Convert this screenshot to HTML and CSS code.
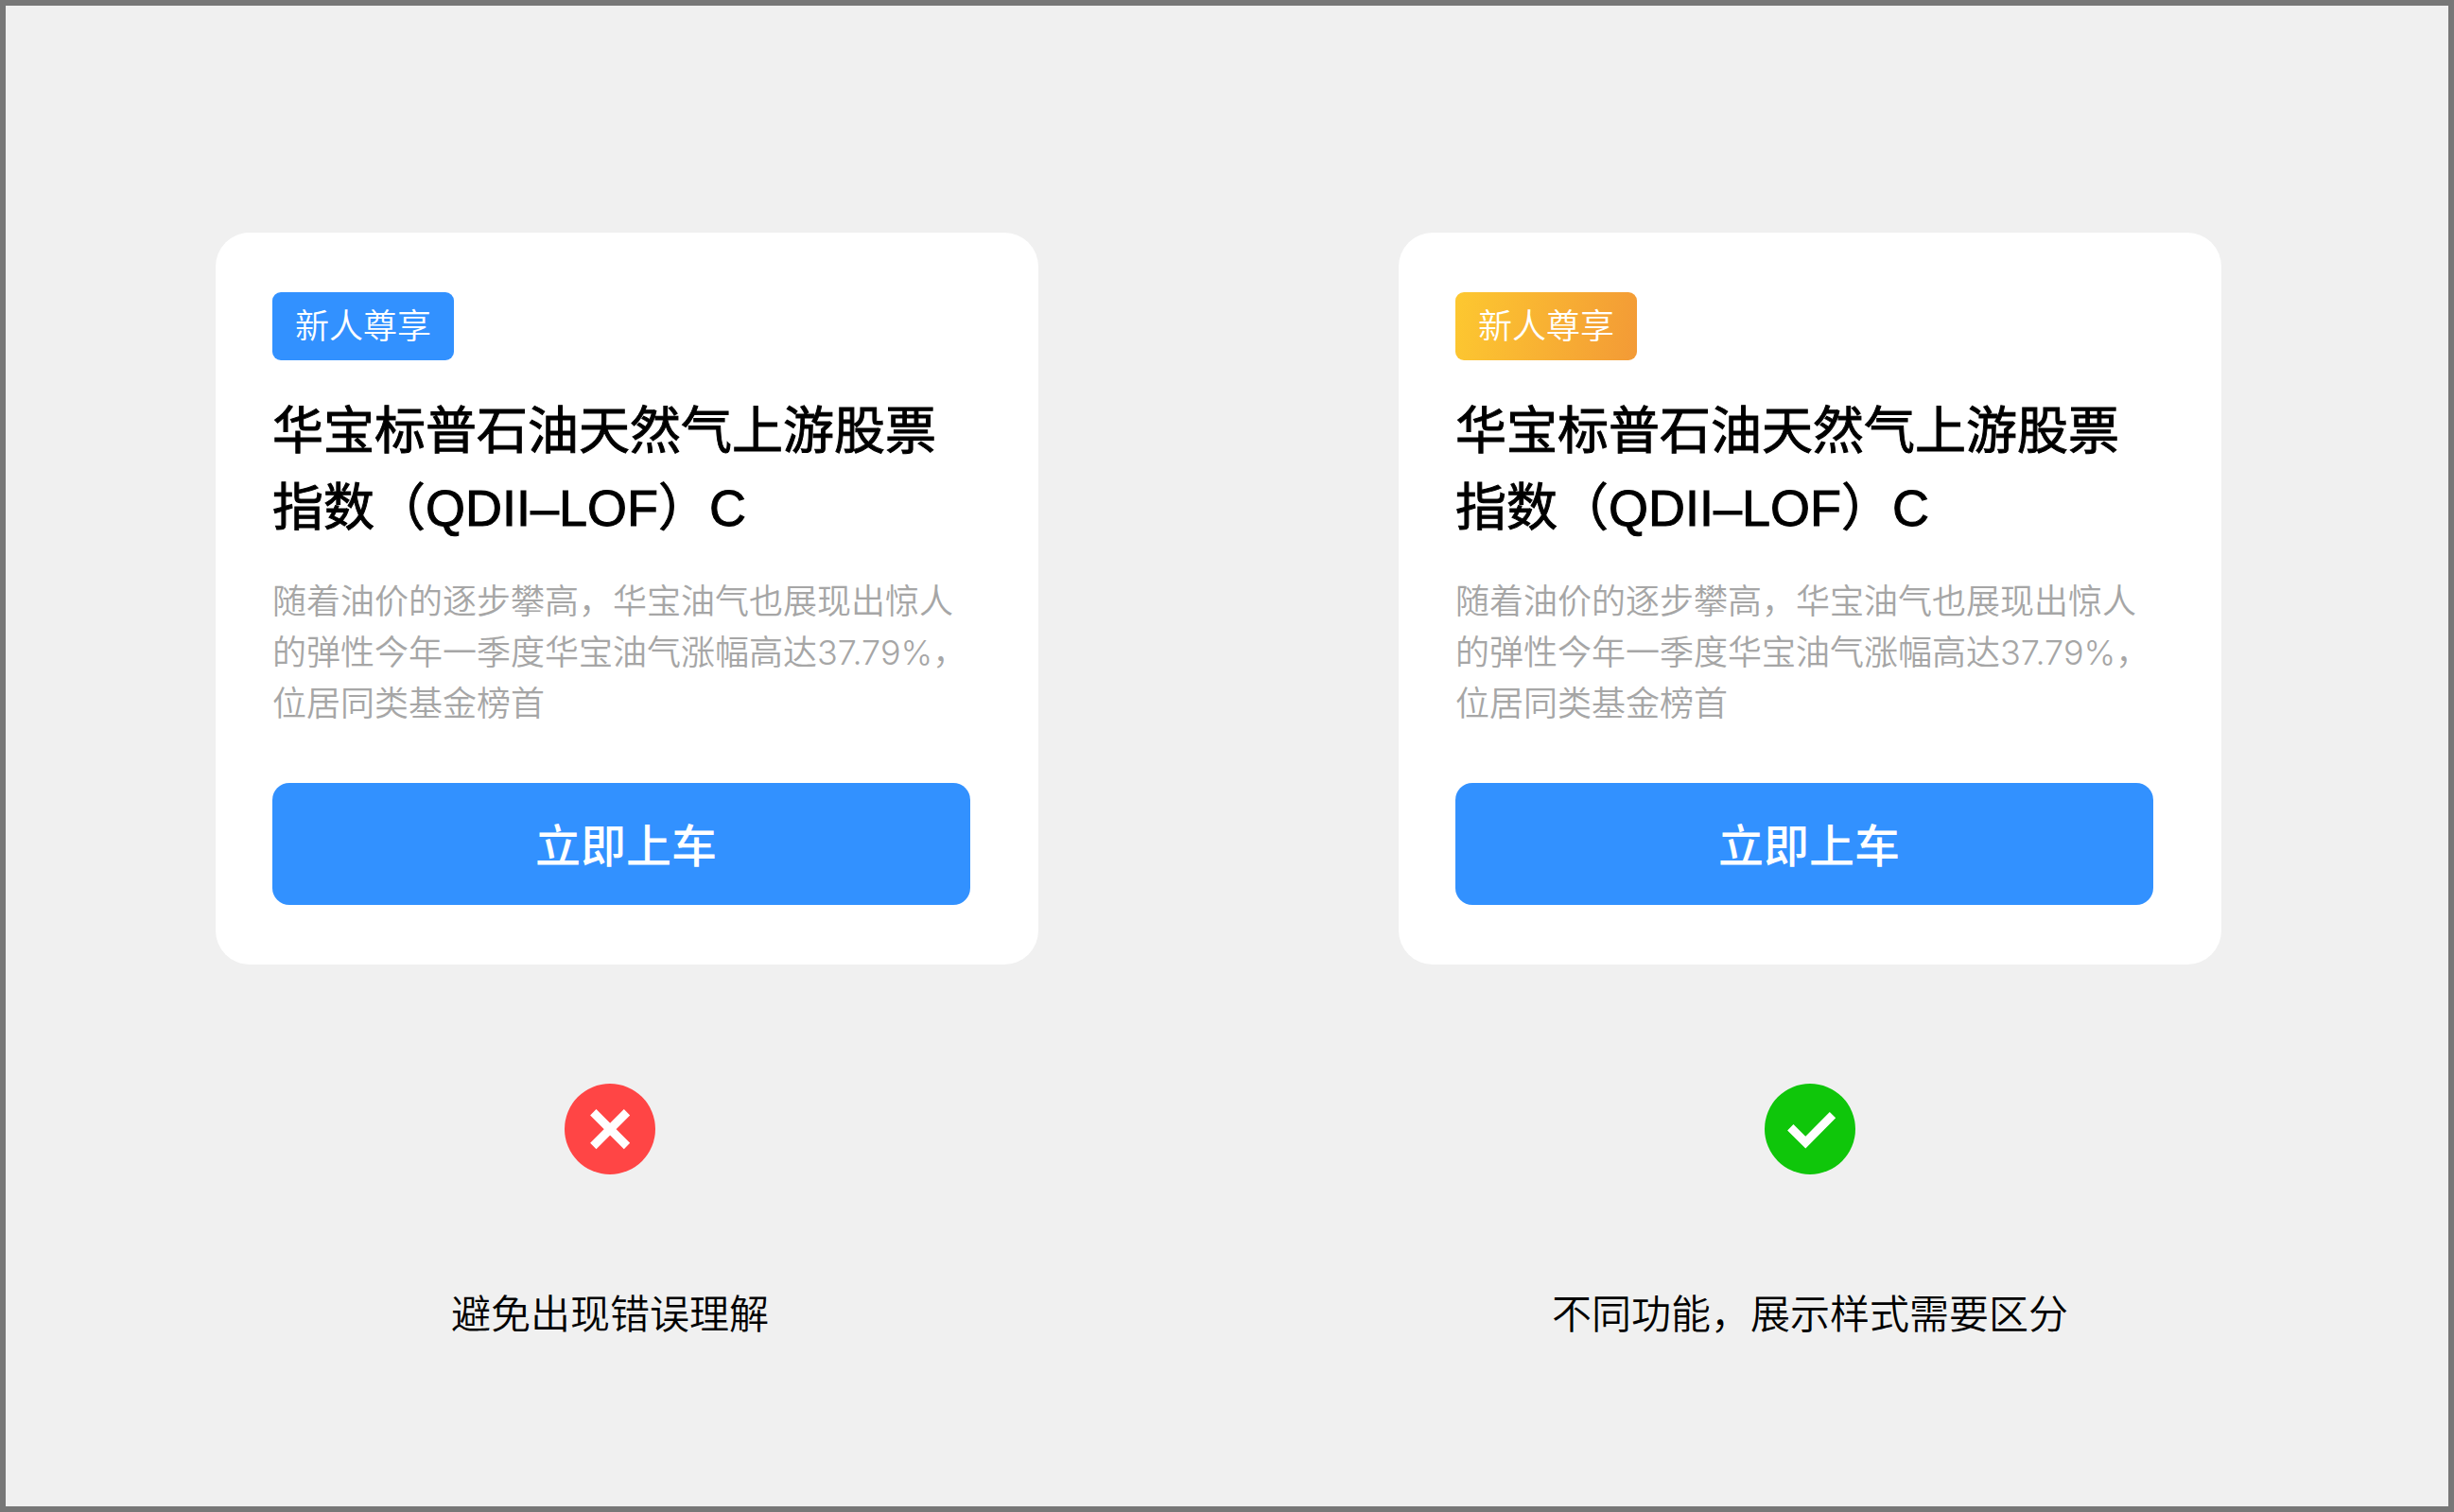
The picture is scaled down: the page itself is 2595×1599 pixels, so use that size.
FILE: index.html
```html
<!DOCTYPE html>
<html lang="zh-CN">
<head>
<meta charset="utf-8">
<meta name="viewport" content="width=device-width, initial-scale=1">
<title>标签样式对比</title>
<link rel="stylesheet" href="styles.css">
</head>
<body>
<main class="board">
  <section class="example example--wrong">
    <article class="card">
      <span class="tag">新人尊享</span>
      <h2 class="card-title">华宝标普石油天然气上游股票指数（QDII–LOF）C</h2>
      <p class="card-text">随着油价的逐步攀高，华宝油气也展现出惊人的弹性今年一季度华宝油气涨幅高达37.79%，位居同类基金榜首</p>
      <button class="card-button" type="button">立即上车</button>
    </article>
    <div class="verdict">
      <svg class="verdict-icon" viewBox="0 0 96 96" aria-hidden="true">
        <circle cx="48" cy="48" r="48" fill="#ff4545"/>
        <path d="M30.300 30.300L66 66M66 30.300L30.300 66" fill="none" stroke="#fff" stroke-width="9"/>
      </svg>
      <p class="verdict-text">避免出现错误理解</p>
    </div>
  </section>
  <section class="example">
    <article class="card">
      <span class="tag tag--gold">新人尊享</span>
      <h2 class="card-title">华宝标普石油天然气上游股票指数（QDII–LOF）C</h2>
      <p class="card-text">随着油价的逐步攀高，华宝油气也展现出惊人的弹性今年一季度华宝油气涨幅高达37.79%，位居同类基金榜首</p>
      <button class="card-button" type="button">立即上车</button>
    </article>
    <div class="verdict">
      <svg class="verdict-icon" viewBox="0 0 96 96" aria-hidden="true">
        <circle cx="48" cy="48" r="48" fill="#0fc60a"/>
        <path d="M27.300 46.200L43.300 62.100L72 33.200" fill="none" stroke="#fff" stroke-width="9"/>
      </svg>
      <p class="verdict-text">不同功能，展示样式需要区分</p>
    </div>
  </section>
</main>
</body>
</html>
```
FILE: styles.css
```css
* {
  box-sizing: border-box;
}

body {
  margin: 0;
  background: #f0f0f0;
  color: #000;
  font-family: Inter, "Noto Sans CJK SC", sans-serif;
}

.board {
  display: grid;
  grid-template-columns: 1fr 1fr;
  align-items: start;
  gap: 381px;
  min-height: 100vh;
  padding: 240px 240px 120px 222px;
  border: 6px solid #777;
}

.card {
  display: flex;
  flex-direction: column;
  align-items: flex-start;
  padding: 63px 72px 63px 60px;
  border-radius: 36px;
  background: #fff;
}

.tag {
  padding: 0 24px;
  border-radius: 9px;
  background: #3291ff;
  color: #fff;
  font-size: 36px;
  font-weight: 350;
  line-height: 72px;
}

.tag--gold {
  background: linear-gradient(100deg, #fdc830, #f39a36);
}

/* Medium weight, drawn as regular plus a thin outline so that both scripts match */
.card-title {
  margin: 35px 0 0;
  font-family: "Liberation Sans", "Noto Sans CJK SC", sans-serif;
  font-size: 54px;
  font-weight: 400;
  line-height: 81px;
  -webkit-text-stroke: 1px currentColor;
}

.card-text {
  margin: 31px 0 0;
  color: #a6a6a6;
  font-size: 36px;
  font-weight: 350;
  line-height: 54px;
}

.card-button {
  align-self: stretch;
  margin-top: 57px;
  padding: 0 0 3px 10px;
  height: 129px;
  border: 0;
  border-radius: 18px;
  background: #3291ff;
  color: #fff;
  font-family: inherit;
  font-size: 48px;
  font-weight: 500;
}

.verdict {
  display: flex;
  flex-direction: column;
  align-items: center;
  padding-top: 126px;
}

.example--wrong .verdict {
  padding-right: 36px;
}

.verdict-icon {
  width: 96px;
  height: 96px;
}

.verdict-text {
  margin: 116px 0 0;
  font-size: 42px;
  font-weight: 350;
  line-height: 64px;
}
```
